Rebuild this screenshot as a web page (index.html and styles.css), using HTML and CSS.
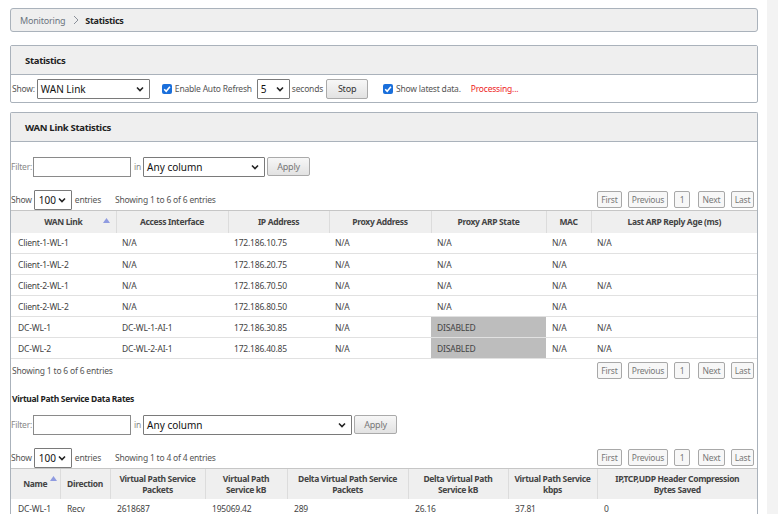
FILE: index.html
```html
<!DOCTYPE html>
<html>
<head>
<meta charset="utf-8">
<link rel="stylesheet" href="styles.css">
</head>
<body>
<div class="page">
  <div class="main">
    <div class="crumb">
      <span class="crumb-link">Monitoring</span>
      <svg class="crumb-sep" width="8" height="10" viewBox="0 0 8 10"><path d="M2 1 L6 5 L2 9" fill="none" stroke="#8a9099" stroke-width="1"/></svg>
      <span class="crumb-cur">Statistics</span>
    </div>

    <div class="panel stats">
      <div class="panel-head">Statistics</div>
      <div class="toolbar">
        <span class="lbl">Show:</span>
        <div class="sel sel-show"><span>WAN Link</span><svg width="8" height="6" viewBox="0 0 8 6"><path d="M1 1.5 L4 4.5 L7 1.5" fill="none" stroke="#222" stroke-width="1.6"/></svg></div>
        <span class="cb"><svg width="10" height="10" viewBox="0 0 10 10"><rect width="10" height="10" rx="2" fill="#1a6fdb"/><path d="M2.2 5.2 L4.2 7.2 L7.9 2.8" fill="none" stroke="#fff" stroke-width="1.6"/></svg></span>
        <span class="lbl lbl-ar">Enable Auto Refresh</span>
        <div class="sel sel-sec"><span>5</span><svg width="8" height="6" viewBox="0 0 8 6"><path d="M1 1.5 L4 4.5 L7 1.5" fill="none" stroke="#222" stroke-width="1.6"/></svg></div>
        <span class="lbl">seconds</span>
        <button class="btn btn-stop">Stop</button>
        <span class="cb cb2"><svg width="10" height="10" viewBox="0 0 10 10"><rect width="10" height="10" rx="2" fill="#1a6fdb"/><path d="M2.2 5.2 L4.2 7.2 L7.9 2.8" fill="none" stroke="#fff" stroke-width="1.6"/></svg></span>
        <span class="lbl lbl-latest">Show latest data.</span>
        <span class="processing">Processing...</span>
      </div>
    </div>

    <div class="panel wan">
      <div class="panel-head">WAN Link Statistics</div>
      <div class="panel-body">
        <div class="filter-row">
          <span class="lbl lbl-light">Filter:</span>
          <div class="input"></div>
          <span class="lbl lbl-light in">in</span>
          <div class="sel sel-col"><span>Any column</span><svg width="8" height="6" viewBox="0 0 8 6"><path d="M1 1.5 L4 4.5 L7 1.5" fill="none" stroke="#222" stroke-width="1.6"/></svg></div>
          <button class="btn btn-apply">Apply</button>
        </div>
        <div class="len-row">
          <span class="lbl">Show</span>
          <div class="sel sel-len"><span>100</span><svg width="8" height="6" viewBox="0 0 8 6"><path d="M1 1.5 L4 4.5 L7 1.5" fill="none" stroke="#222" stroke-width="1.6"/></svg></div>
          <span class="lbl">entries</span>
          <span class="info">Showing 1 to 6 of 6 entries</span>
          <div class="pager">
            <button class="pbtn pb-first">First</button><button class="pbtn pb-prev">Previous</button><button class="pbtn pb-num">1</button><button class="pbtn pb-next">Next</button><button class="pbtn pb-last">Last</button>
          </div>
        </div>
        <table class="grid grid1">
          <colgroup>
            <col class="c1a"><col class="c1b"><col class="c1c"><col class="c1d"><col class="c1e"><col class="c1f"><col class="c1g">
          </colgroup>
          <thead>
            <tr><th class="sorted">WAN Link<svg class="arrow" width="7" height="5" viewBox="0 0 7 5"><path d="M0 5 L3.5 0 L7 5Z" fill="#8f9be0"/></svg></th><th>Access Interface</th><th>IP Address</th><th>Proxy Address</th><th>Proxy ARP State</th><th>MAC</th><th>Last ARP Reply Age (ms)</th></tr>
          </thead>
          <tbody>
            <tr><td>Client-1-WL-1</td><td>N/A</td><td>172.186.10.75</td><td>N/A</td><td>N/A</td><td>N/A</td><td>N/A</td></tr>
            <tr><td>Client-1-WL-2</td><td>N/A</td><td>172.186.20.75</td><td>N/A</td><td>N/A</td><td>N/A</td><td></td></tr>
            <tr><td>Client-2-WL-1</td><td>N/A</td><td>172.186.70.50</td><td>N/A</td><td>N/A</td><td>N/A</td><td>N/A</td></tr>
            <tr><td>Client-2-WL-2</td><td>N/A</td><td>172.186.80.50</td><td>N/A</td><td>N/A</td><td>N/A</td><td></td></tr>
            <tr><td>DC-WL-1</td><td>DC-WL-1-AI-1</td><td>172.186.30.85</td><td>N/A</td><td class="disabled">DISABLED</td><td>N/A</td><td>N/A</td></tr>
            <tr><td>DC-WL-2</td><td>DC-WL-2-AI-1</td><td>172.186.40.85</td><td>N/A</td><td class="disabled">DISABLED</td><td>N/A</td><td>N/A</td></tr>
          </tbody>
        </table>
        <div class="foot-row">
          <span class="info foot-info">Showing 1 to 6 of 6 entries</span>
          <div class="pager">
            <button class="pbtn pb-first">First</button><button class="pbtn pb-prev">Previous</button><button class="pbtn pb-num">1</button><button class="pbtn pb-next">Next</button><button class="pbtn pb-last">Last</button>
          </div>
        </div>

        <div class="sub-title">Virtual Path Service Data Rates</div>
        <div class="filter-row filter2">
          <span class="lbl lbl-light">Filter:</span>
          <div class="input"></div>
          <span class="lbl lbl-light in">in</span>
          <div class="sel sel-col2"><span>Any column</span><svg width="8" height="6" viewBox="0 0 8 6"><path d="M1 1.5 L4 4.5 L7 1.5" fill="none" stroke="#222" stroke-width="1.6"/></svg></div>
          <button class="btn btn-apply">Apply</button>
        </div>
        <div class="len-row len2">
          <span class="lbl">Show</span>
          <div class="sel sel-len"><span>100</span><svg width="8" height="6" viewBox="0 0 8 6"><path d="M1 1.5 L4 4.5 L7 1.5" fill="none" stroke="#222" stroke-width="1.6"/></svg></div>
          <span class="lbl">entries</span>
          <span class="info">Showing 1 to 4 of 4 entries</span>
          <div class="pager">
            <button class="pbtn pb-first">First</button><button class="pbtn pb-prev">Previous</button><button class="pbtn pb-num">1</button><button class="pbtn pb-next">Next</button><button class="pbtn pb-last">Last</button>
          </div>
        </div>
        <table class="grid grid2">
          <colgroup>
            <col class="c2a"><col class="c2b"><col class="c2c"><col class="c2d"><col class="c2e"><col class="c2f"><col class="c2g"><col class="c2h">
          </colgroup>
          <thead>
            <tr><th class="sorted">Name<svg class="arrow" width="7" height="5" viewBox="0 0 7 5"><path d="M0 5 L3.5 0 L7 5Z" fill="#8f9be0"/></svg></th><th>Direction</th><th>Virtual Path Service<br>Packets</th><th>Virtual Path<br>Service kB</th><th>Delta Virtual Path Service<br>Packets</th><th>Delta Virtual Path<br>Service kB</th><th>Virtual Path Service<br>kbps</th><th>IP,TCP,UDP Header Compression<br>Bytes Saved</th></tr>
          </thead>
          <tbody>
            <tr><td>DC-WL-1</td><td>Recv</td><td>2618687</td><td>195069.42</td><td>289</td><td>26.16</td><td>37.81</td><td>0</td></tr>
          </tbody>
        </table>
      </div>
    </div>
  </div>
  <div class="scroll-track"></div>
</div>
</body>
</html>
```
FILE: styles.css
```css
* { box-sizing: border-box; }
html, body { margin: 0; padding: 0; height: 100%; overflow: hidden; background: #fff; }
body { font-family: "Noto Sans", "Open Sans", sans-serif; font-size: 8.5px; letter-spacing: -0.2px; color: #333; }
.page { display: flex; height: 514px; }
.main { width: 767px; padding: 8px 9px 0 10px; }
.scroll-track { width: 11px; background: #f3f3f3; }

.crumb { height: 24px; background: #efefef; border: 1px solid #aab2bb; border-radius: 3px; display: flex; align-items: center; padding-left: 9px; font-size: 9px; }
.crumb-link { color: #6b7580; }
.crumb-sep { margin: 0 5px 0 7px; }
.crumb-cur { font-weight: bold; color: #222; letter-spacing: -0.3px; }

.panel { border: 1px solid #aab2bb; border-radius: 2px; }
.stats { margin-top: 13px; }
.panel-head { height: 29px; background: #efefef; border-bottom: 1px solid #aab2bb; display: flex; align-items: center; padding-left: 14px; font-weight: bold; font-size: 9.5px; color: #222; letter-spacing: -0.3px; }

.toolbar { height: 27px; display: flex; align-items: center; padding-left: 1px; }
.lbl { color: #555; }
.lbl-light { color: #888; }
.sel { display: flex; align-items: center; justify-content: space-between; height: 20px; border: 1px solid #7a7a7a; border-radius: 1px; background: #fff; padding: 0 5px 0 3px; font-size: 10px; color: #111; letter-spacing: 0; }
.sel-show { width: 113px; margin-left: 2px; }
.cb { display: flex; margin-left: 12px; }
.lbl-ar { margin-left: 3px; }
.sel-sec { width: 33px; margin-left: 5px; margin-right: 2px; }
.btn { font-family: inherit; font-size: 9px; letter-spacing: -0.2px; color: #333; background: linear-gradient(#f7f7f7, #e2e2e2); border: 1px solid #aaa; border-radius: 2px; padding: 0; }
.btn-stop { width: 42px; height: 20px; margin-left: 3px; }
.cb2 { margin-left: 15px; }
.lbl-latest { margin-left: 3px; }
.processing { color: #ee1c1c; margin-left: 10px; }

.wan { margin-top: 9px; border-bottom: none; border-radius: 2px 2px 0 0; height: 420px; }
.panel-body { padding: 0; }
.filter-row { display: flex; align-items: center; margin-top: 14px; height: 21px; }
.input { width: 98px; height: 20px; border: 1px solid #8a8a8a; margin-left: 1px; background: #fff; }
.in { margin-left: 3px; }
.sel-col { width: 122px; margin-left: 2px; }
.sel-col2 { width: 209px; margin-left: 2px; }
.btn-apply { width: 43px; height: 19px; margin-left: 2px; color: #777; }

.len-row { display: flex; align-items: center; margin-top: 12px; height: 21px; }
.sel-len { width: 38px; margin-left: 2px; margin-right: 3px; padding-left: 4px; font-size: 10px; }
.info { margin-left: 14px; color: #555; }
.pager { margin-left: auto; display: flex; padding-right: 3px; }
.pbtn { font-family: inherit; font-size: 8.5px; letter-spacing: -0.2px; color: #777; background: #f7f7f7; border: 1px solid #a8a8a8; border-radius: 2px; height: 17px; padding: 0; }
.pb-first { width: 25px; }
.pb-prev { width: 40px; margin-left: 6px; }
.pb-num { width: 16px; margin-left: 6px; }
.pb-next { width: 27px; margin-left: 8px; }
.pb-last { width: 23px; margin-left: 6px; }

.grid { width: 100%; border-collapse: collapse; table-layout: fixed; }
.grid th { background: #efefef; font-weight: bold; color: #444; border-top: 1px solid #c6c6c6; border-left: 1px solid #dcdcdc; text-align: center; font-size: 8.5px; letter-spacing: -0.35px; }
.grid th:first-child { border-left: none; }
.grid td { padding: 0 0 0 6px; height: 21px; border-bottom: 1px solid #e1e1e1; color: #444; white-space: nowrap; }
.grid td:first-child { padding-left: 7px; }
.grid1 th { height: 22px; }
.sorted { position: relative; }
.arrow { position: absolute; right: 6px; top: 7px; }
.disabled { background: #bdbdbd; color: #555; }
.c1a { width: 105px; } .c1b { width: 112px; } .c1c { width: 101px; } .c1d { width: 102px; }
.c1e { width: 115px; } .c1f { width: 45px; } .c1g { width: auto; }

.foot-row { display: flex; align-items: center; margin-top: 1px; height: 20px; }
.foot-info { margin-left: 1px; }

.sub-title { font-weight: bold; color: #222; margin: 13px 0 0 1px; font-size: 8.5px; letter-spacing: -0.3px; }
.filter2 { margin-top: 10px; }
.len2 { margin-top: 12px; }

.grid2 th { height: 30px; line-height: 1.3; white-space: nowrap; }
.grid2 td { padding-left: 7px; }
.c2a { width: 49px; } .c2b { width: 50px; } .c2c { width: 95px; } .c2d { width: 82px; }
.c2e { width: 121px; } .c2f { width: 100px; } .c2g { width: 89px; } .c2h { width: auto; }
.grid2 .arrow { right: 3px; top: 7px; }
```
